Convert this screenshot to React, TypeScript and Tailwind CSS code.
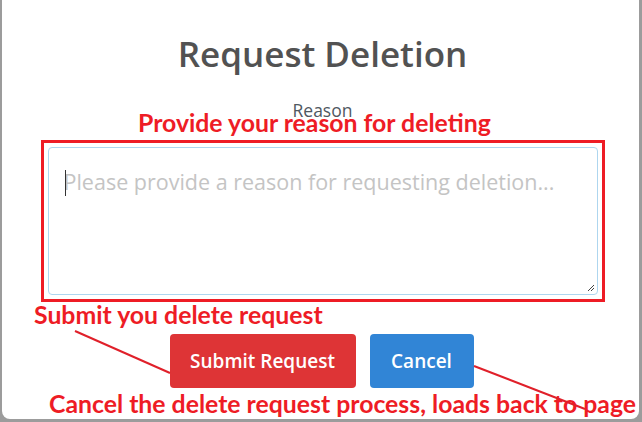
export default function App() {
  return (
    <div className="w-[642px] h-[422px] bg-[#9c9c9c] overflow-hidden relative" style={{ fontFamily: '"Open Sans", "Noto Sans", sans-serif' }}>
      <div className="ml-[2px] w-[637px] h-[419px] bg-white rounded-b-[8px] flex flex-col items-center">
        <h1 className="mt-[28px] text-[35px] leading-[52px] font-semibold text-[#525252] ml-[4px]">Request Deletion</h1>
        <label className="mt-[18px] ml-[4px] text-[17.5px] leading-[24px] text-[#4f5861]">Reason</label>
        <div className="mt-[18px] w-[564px] h-[162px] border-[3px] border-[#ee1c25] p-[4px] ml-[4px]">
          <div className="relative w-full h-full rounded-[4px] border border-[#aed6ef] pl-[15px] pt-[20px]">
            <span className="absolute left-[16px] top-[22px] w-px h-[26px] bg-[#333]" />
            <div className="text-[21.5px] leading-[28px] text-[#c4c4c4]">Please provide a reason for requesting deletion...</div>
            <svg className="absolute right-[2px] bottom-[2px]" width="9" height="9" viewBox="0 0 9 9">
              <path d="M8 2 L2 8 M8 5 L5 8" stroke="#444" strokeWidth="1" />
            </svg>
          </div>
        </div>
        <div className="mt-[32px] flex gap-[14px] ml-[2px]">
          <button className="w-[186px] h-[54px] rounded-[4px] bg-[#de3436] text-white text-[19px] font-semibold">Submit Request</button>
          <button className="w-[104px] h-[54px] rounded-[4px] bg-[#3185d6] text-white text-[19px] font-semibold">Cancel</button>
        </div>
      </div>
      <div className="absolute inset-0 pointer-events-none" style={{ fontFamily: 'Lato, "Open Sans", sans-serif' }}>
        <div className="absolute left-[138px] top-[109px] text-[24.8px] font-bold text-[#ee1c25] leading-[28px] whitespace-nowrap">Provide your reason for deleting</div>
        <div className="absolute left-[34px] top-[301px] text-[24.8px] font-bold text-[#ee1c25] leading-[28px] whitespace-nowrap">Submit you delete request</div>
        <div className="absolute left-[49px] top-[390px] text-[24.8px] font-bold text-[#ee1c25] leading-[28px] whitespace-nowrap">Cancel the delete request process, loads back to page</div>
        <svg className="absolute left-0 top-0" width="642" height="422">
          <line x1="75" y1="331" x2="170" y2="373" stroke="#e0202a" strokeWidth="2" />
          <line x1="474" y1="366" x2="585" y2="409" stroke="#e0202a" strokeWidth="2" />
        </svg>
      </div>
    </div>
  );
}
